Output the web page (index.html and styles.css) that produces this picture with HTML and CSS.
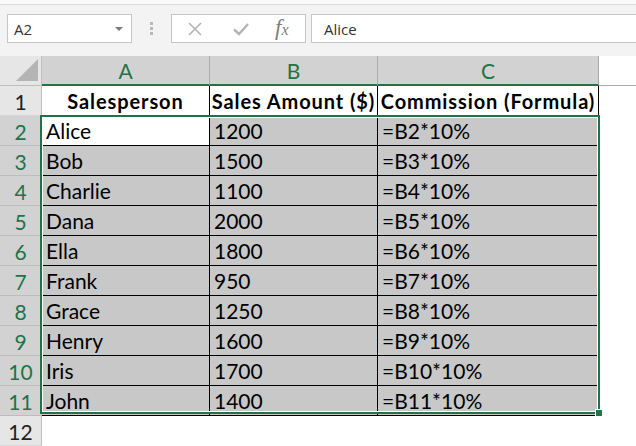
FILE: index.html
```html
<!DOCTYPE html>
<html>
<head>
<meta charset="utf-8">
<link rel="stylesheet" href="styles.css">
</head>
<body>
<div class="toolbar">
  <div class="namebox">
    <span class="name">A2</span>
    <span class="caret"></span>
  </div>
  <div class="grip"><i></i><i></i><i></i></div>
  <div class="fbuttons">
    <svg class="ic" width="16" height="16" viewBox="0 0 16 16"><path d="M2 2 L14 14 M14 2 L2 14" stroke="#b4b4b4" stroke-width="1.6" fill="none"/></svg>
    <svg class="ic" width="18" height="16" viewBox="0 0 18 16"><path d="M2 8.5 L7 13 L16 3" stroke="#b4b4b4" stroke-width="2.4" fill="none"/></svg>
    <span class="fx">f<sub>x</sub></span>
  </div>
  <div class="finput">Alice</div>
</div>
<div class="sheet">
  <div class="corner"><span class="tri"></span></div>
  <div class="ch sel">A</div>
  <div class="ch sel">B</div>
  <div class="ch sel">C</div>
  <div class="ch rest"></div>

  <div class="rh">1</div>
  <div class="c hd">Salesperson</div>
  <div class="c hd">Sales Amount ($)</div>
  <div class="c hd">Commission (Formula)</div>
  <div class="e"></div>

  <div class="rh sel">2</div><div class="c act">Alice</div><div class="c f">1200</div><div class="c f">=B2*10%</div><div class="e"></div>
  <div class="rh sel">3</div><div class="c f">Bob</div><div class="c f">1500</div><div class="c f">=B3*10%</div><div class="e"></div>
  <div class="rh sel">4</div><div class="c f">Charlie</div><div class="c f">1100</div><div class="c f">=B4*10%</div><div class="e"></div>
  <div class="rh sel">5</div><div class="c f">Dana</div><div class="c f">2000</div><div class="c f">=B5*10%</div><div class="e"></div>
  <div class="rh sel">6</div><div class="c f">Ella</div><div class="c f">1800</div><div class="c f">=B6*10%</div><div class="e"></div>
  <div class="rh sel">7</div><div class="c f">Frank</div><div class="c f">950</div><div class="c f">=B7*10%</div><div class="e"></div>
  <div class="rh sel">8</div><div class="c f">Grace</div><div class="c f">1250</div><div class="c f">=B8*10%</div><div class="e"></div>
  <div class="rh sel">9</div><div class="c f">Henry</div><div class="c f">1600</div><div class="c f">=B9*10%</div><div class="e"></div>
  <div class="rh sel">10</div><div class="c f">Iris</div><div class="c f">1700</div><div class="c f">=B10*10%</div><div class="e"></div>
  <div class="rh sel">11</div><div class="c f">John</div><div class="c f">1400</div><div class="c f">=B11*10%</div><div class="e"></div>

  <div class="rh">12</div><div class="e"></div><div class="e"></div><div class="e"></div><div class="e"></div>

  <div class="selection"><span class="handle"></span></div>
</div>
</body>
</html>
```
FILE: styles.css
```css
html, body {
  margin: 0;
  padding: 0;
  background: #ffffff;
  overflow: hidden;
}
body {
  width: 636px;
  height: 446px;
  font-family: Lato, "Liberation Sans", sans-serif;
}
.toolbar {
  height: 56px;
  box-sizing: border-box;
  background: #f3f3f3;
  border-top: 4px solid #fafafa;
  box-shadow: inset 0 1px 0 #dadada;
  padding: 10px 0 0 7px;
  display: flex;
  align-items: flex-start;
}
.namebox {
  width: 125px;
  height: 29px;
  box-sizing: border-box;
  background: #fff;
  border: 1px solid #c6c6c6;
  display: flex;
  align-items: center;
  justify-content: space-between;
  padding: 0 8px 0 6px;
  font-family: "Open Sans", "Liberation Sans", sans-serif;
  font-size: 15px;
  color: #333;
}
.caret {
  width: 0;
  height: 0;
  border-left: 4px solid transparent;
  border-right: 4px solid transparent;
  border-top: 4px solid #7a7a7a;
  margin-top: 1px;
}
.grip {
  width: 39px;
  height: 29px;
  display: flex;
  flex-direction: column;
  align-items: center;
  justify-content: center;
  gap: 2px;
}
.grip i {
  display: block;
  width: 3px;
  height: 3px;
  background: #b9b9b9;
}
.fbuttons {
  width: 135px;
  height: 29px;
  box-sizing: border-box;
  background: #fff;
  border: 1px solid #c6c6c6;
  display: flex;
  align-items: center;
  padding-left: 15px;
  gap: 29px;
}
.ic { display: block; }
.fx {
  font-family: "Liberation Serif", serif;
  font-style: italic;
  font-size: 23px;
  color: #7e7e7e;
  line-height: 1;
  margin-left: -4px;
  margin-top: -3px;
}
.fx sub {
  font-size: 16px;
  vertical-align: 0;
}
.finput {
  margin-left: 5px;
  flex: 1;
  height: 29px;
  box-sizing: border-box;
  background: #fff;
  border: 1px solid #c6c6c6;
  border-right: none;
  padding-left: 12px;
  display: flex;
  align-items: center;
  font-family: "Open Sans", "Liberation Sans", sans-serif;
  font-size: 15px;
  color: #333;
}
.sheet {
  position: relative;
  display: grid;
  grid-template-columns: 42px 168px 168px 221px 37px;
  grid-auto-rows: 30px;
}
.sheet > div {
  box-sizing: border-box;
}
.corner {
  background: #e6e6e6;
  border-right: 1px solid #bdbdbd;
  border-bottom: 1px solid #bdbdbd;
  position: relative;
}
.tri {
  position: absolute;
  right: 3px;
  bottom: 4px;
  width: 0;
  height: 0;
  border-left: 22px solid transparent;
  border-bottom: 22px solid #b4b4b4;
}
.ch {
  background: #d2d2d2;
  border-right: 1px solid #ababab;
  border-bottom: 2px solid #217346;
  color: #217346;
  font-size: 21px;
  display: flex;
  align-items: center;
  justify-content: center;
  padding-top: 1px;
}
.ch.rest {
  background: #fff;
  border-right: none;
  border-bottom: 1px solid #ababab;
}
.rh {
  background: #e6e6e6;
  border-right: 1px solid #bdbdbd;
  border-bottom: 1px solid #d4d4d4;
  color: #222;
  font-size: 21px;
  display: flex;
  align-items: center;
  justify-content: center;
  padding-top: 1px;
}
.rh.sel {
  background: #d2d2d2;
  color: #217346;
  border-bottom-color: #bdbdbd;
}
.c {
  border-right: 1px solid #000;
  border-bottom: 1px solid #000;
  font-size: 21px;
  color: #000;
  padding-left: 4px;
  display: flex;
  align-items: center;
  white-space: nowrap;
}
.c.hd {
  font-weight: bold;
  font-size: 20px;
  background: #fff;
  padding-left: 0;
  justify-content: center;
  letter-spacing: 0.9px;
}
.c.f { background: #c8c8c8; }
.c.act { background: #fff; }
.e { background: #fff; }
.selection {
  position: absolute;
  left: 40px;
  top: 59px;
  width: 560px;
  height: 299px;
  border: 2px solid #217346;
  box-shadow: inset 0 0 0 1px #fff;
  pointer-events: none;
}
.handle {
  position: absolute;
  right: -5px;
  bottom: -5px;
  width: 6px;
  height: 6px;
  background: #217346;
  border: 1px solid #fff;
}
```
